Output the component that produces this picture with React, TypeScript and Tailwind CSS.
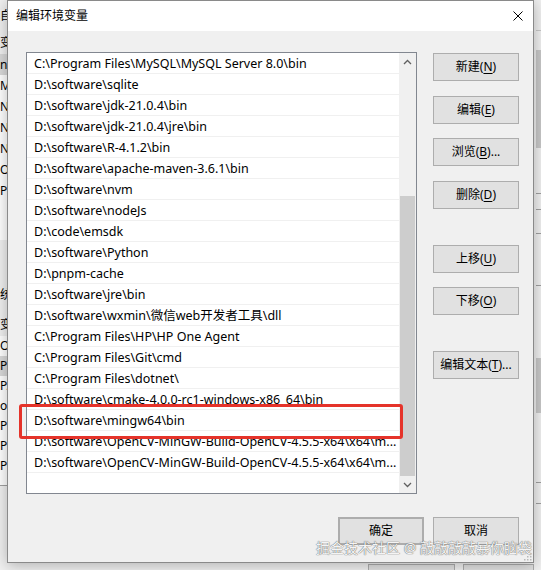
import type { ReactNode } from "react";

// 编辑环境变量：Path 列表 + 右侧操作按钮 + 确定/取消

const PATHS = [
  "C:\\Program Files\\MySQL\\MySQL Server 8.0\\bin",
  "D:\\software\\sqlite",
  "D:\\software\\jdk-21.0.4\\bin",
  "D:\\software\\jdk-21.0.4\\jre\\bin",
  "D:\\software\\R-4.1.2\\bin",
  "D:\\software\\apache-maven-3.6.1\\bin",
  "D:\\software\\nvm",
  "D:\\software\\nodeJs",
  "D:\\code\\emsdk",
  "D:\\software\\Python",
  "D:\\pnpm-cache",
  "D:\\software\\jre\\bin",
  "D:\\software\\wxmin\\微信web开发者工具\\dll",
  "C:\\Program Files\\HP\\HP One Agent",
  "C:\\Program Files\\Git\\cmd",
  "C:\\Program Files\\dotnet\\",
  "D:\\software\\cmake-4.0.0-rc1-windows-x86_64\\bin",
  "D:\\software\\mingw64\\bin",
  "D:\\software\\OpenCV-MinGW-Build-OpenCV-4.5.5-x64\\x64\\m...",
  "D:\\software\\OpenCV-MinGW-Build-OpenCV-4.5.5-x64\\x64\\m...",
];

// 背后窗口左侧露出的一小条文字
const LEFT_TOP = ["n", "M", "N", "N", "N", "O", "Pa"];
const LEFT_BOTTOM = ["O", "Pa", "PA", "ol", "PN", "PR", "PR"];

function Key({ k }: { k: string }) {
  return <span className="underline underline-offset-2">{k}</span>;
}

function Btn({
  children,
  className = "",
}: {
  children: ReactNode;
  className?: string;
}) {
  return (
    <button
      type="button"
      className={`flex h-[28px] w-[86px] shrink-0 items-center justify-center border border-[#adadad] bg-[#e1e1e1] text-[12px] text-black ${className}`}
    >
      {children}
    </button>
  );
}

function Chevron({ down = false }: { down?: boolean }) {
  return (
    <svg width="9" height="6" viewBox="0 0 9 6" className={down ? "rotate-180" : ""}>
      <polyline
        points="1,5 4.5,1.5 8,5"
        fill="none"
        stroke="#606060"
        strokeWidth="1.3"
      />
    </svg>
  );
}

export default function App() {
  return (
    <div className="relative h-[570px] w-[541px] overflow-hidden bg-[#f0f0f0] font-['Noto_Sans','Noto_Sans_CJK_SC',sans-serif] text-[12px] text-black">
      {/* 背后的“环境变量”窗口 */}
      <div className="flex h-full w-full">
        <div className="flex w-[7px] flex-col overflow-hidden whitespace-nowrap">
          <div className="h-[32px] pt-[8px] leading-[16px]">自</div>
          <div className="h-[22px] leading-[22px]">变</div>
          <div className="flex h-[186px] flex-col bg-white">
            {LEFT_TOP.map((t, i) => (
              <div
                key={i}
                className={`h-[21px] leading-[21px] ${i === 0 ? "bg-[#d9d9d9]" : ""}`}
              >
                {t}
              </div>
            ))}
          </div>
          <div className="mt-[44px] h-[22px] leading-[22px]">统</div>
          <div className="mt-[8px] h-[22px] leading-[22px]">变</div>
          <div className="flex h-[150px] flex-col border-b border-[#a0a0a0] bg-white">
            {LEFT_BOTTOM.map((t, i) => (
              <div
                key={i}
                className={`h-[20px] leading-[20px] ${i === 1 ? "bg-[#d9d9d9]" : ""}`}
              >
                {t}
              </div>
            ))}
          </div>
        </div>
        <div className="flex flex-1 flex-col justify-end">
          <div className="flex gap-[8px] pl-[361px]">
            <div className="h-[6px] w-[87px] border border-b-0 border-[#adadad] bg-[#e1e1e1]" />
            <div className="h-[6px] w-[71px] border border-b-0 border-[#adadad] bg-[#e1e1e1]" />
          </div>
        </div>
        <div className="flex w-[7px] flex-col pl-[2px]">
          <div className="mt-[30px] h-px bg-[#c8c8c8]" />
          <div className="mt-[19px] h-[98px] bg-[#c8c8c8]" />
          <div className="mt-[45px] h-px bg-[#a0a0a0]" />
          <div className="mt-[15px] h-px bg-[#a0a0a0]" />
          <div className="mt-[23px] h-px bg-[#a0a0a0]" />
          <div className="mt-[51px] h-px bg-[#a0a0a0]" />
          <div className="mt-[72px] h-[55px] bg-[#c8c8c8]" />
          <div className="mt-[69px] h-px bg-[#a0a0a0]" />
          <div className="mt-[20px] h-px bg-[#a0a0a0]" />
        </div>
      </div>

      {/* 对话框 */}
      <div className="absolute left-[7px] top-0 flex h-[563px] w-[527px] flex-col border border-[#8a8a8a] bg-[#f0f0f0] shadow-[0_2px_14px_rgba(0,0,0,0.28)]">
        <div className="flex h-[30px] shrink-0 items-center justify-between bg-white pl-[8px] pr-[10px]">
          <span className="text-[12px]">编辑环境变量</span>
          <svg width="10" height="10" viewBox="0 0 10 10">
            <path d="M0.5 0.5 L9.5 9.5 M9.5 0.5 L0.5 9.5" stroke="#000" strokeWidth="1" />
          </svg>
        </div>

        <div className="flex flex-1 flex-col pl-[18px] pr-[14px] pt-[21px]">
          <div className="flex">
            <div className="flex h-[442px] w-[391px] border border-[#828790] bg-white">
              <div className="flex min-w-0 flex-1 flex-col">
                {PATHS.map((p, i) => (
                  <div
                    key={i}
                    className="h-[21px] shrink-0 overflow-hidden whitespace-nowrap border-b border-[#f0f0f0] pl-[7px] pt-[1px] text-[12.5px] leading-[19px]"
                  >
                    {p}
                  </div>
                ))}
              </div>
              <div className="flex w-[17px] flex-col bg-[#f0f0f0]">
                <div className="flex h-[17px] items-center justify-center">
                  <Chevron />
                </div>
                <div className="flex flex-1 flex-col pt-[126px]">
                  <div className="mx-[1px] flex-1 bg-[#cdcdcd]" />
                </div>
                <div className="flex h-[17px] items-center justify-center">
                  <Chevron down />
                </div>
              </div>
            </div>

            <div className="ml-[16px] flex flex-col pt-[1px]">
              <Btn>
                新建(<Key k="N" />)
              </Btn>
              <Btn className="mt-[15px]">
                编辑(<Key k="E" />)
              </Btn>
              <Btn className="mt-[14px]">
                浏览(<Key k="B" />)...
              </Btn>
              <Btn className="mt-[15px]">
                删除(<Key k="D" />)
              </Btn>
              <Btn className="mt-[36px]">
                上移(<Key k="U" />)
              </Btn>
              <Btn className="mt-[14px]">
                下移(<Key k="O" />)
              </Btn>
              <Btn className="mt-[36px]">
                编辑文本(<Key k="T" />)...
              </Btn>
            </div>
          </div>

          <div className="mt-[23px] flex justify-end gap-[9px]">
            <Btn className="border-2 border-[#0078d7]">确定</Btn>
            <Btn>取消</Btn>
          </div>
        </div>
      </div>

      {/* 标注框 */}
      <div className="absolute left-[19px] top-[404px] h-[35px] w-[384px] rounded-[3px] border-[3px] border-[#e5332a]" />

      {/* 右下角缩放手柄 */}
      <svg className="absolute left-[523px] top-[552px]" width="9" height="9" viewBox="0 0 9 9">
        {[
          [7, 1],
          [4, 4],
          [7, 4],
          [1, 7],
          [4, 7],
          [7, 7],
        ].map(([x, y], i) => (
          <rect key={i} x={x} y={y} width="1.5" height="1.5" fill="#b8b8b8" />
        ))}
      </svg>

      {/* 水印 */}
      <div className="absolute left-[316px] top-[539px] whitespace-nowrap text-[14px] leading-[18px] text-[#f4f4f4] [text-shadow:0_0_1px_#6a6a6a,0_0_1px_#6a6a6a]">
        掘金技术社区 @ 敲敲敲敲暴你脑袋
      </div>
    </div>
  );
}
